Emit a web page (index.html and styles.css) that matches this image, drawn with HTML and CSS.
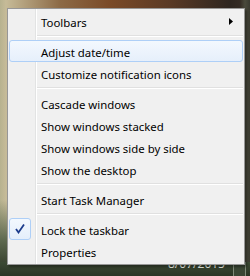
FILE: index.html
```
<!DOCTYPE html>
<html lang="en">
<head>
    <meta charset="UTF-8">
    <title>Taskbar menu</title>
    <link rel="stylesheet" href="styles.css">
</head>
<body>
    <div class="desktop">
        <div class="wallpaper"></div>
        <div class="taskbar">
            <span class="clock">8/07/2015</span>
            <span class="show-desktop"></span>
        </div>

        <ul class="menu">
            <li class="item has-sub">Toolbars
                <svg class="arrow" width="4" height="7" viewBox="0 0 4 7"><path d="M0 0 L4 3.5 L0 7 Z" fill="#000"/></svg>
            </li>
            <li class="sep"></li>
            <li class="item hover">Adjust date/time</li>
            <li class="item">Customize notification icons</li>
            <li class="sep"></li>
            <li class="item">Cascade windows</li>
            <li class="item">Show windows stacked</li>
            <li class="item">Show windows side by side</li>
            <li class="item">Show the desktop</li>
            <li class="sep"></li>
            <li class="item">Start Task Manager</li>
            <li class="sep"></li>
            <li class="item checked">
                <span class="check">
                    <svg width="12" height="12" viewBox="0 0 12 12"><path d="M2 6 L4.5 9.5 L10 1.5" stroke="#1c3c8c" stroke-width="1.8" fill="none"/></svg>
                </span>
                Lock the taskbar
            </li>
            <li class="item">Properties</li>
        </ul>
    </div>
</body>
</html>
```

FILE: styles.css
```
* {
    margin: 0;
    padding: 0;
    box-sizing: border-box;
}

body {
    font-family: 'Noto Sans', 'Open Sans', Arial, sans-serif;
    font-size: 11.4px;
    background: #2c3424;
}

/* Fundo */
.desktop {
    position: relative;
    width: 250px;
    height: 276px;
    overflow: hidden;
    display: flex;
    flex-direction: column;
}

.wallpaper {
    flex: 1;
    background:
        linear-gradient(90deg, rgba(0,0,0,0) 0, rgba(0,0,0,0) 240px, #4a4a3c 245px, #3a3a30 250px),
        linear-gradient(180deg, rgba(0,0,0,0) 0, rgba(0,0,0,0) 200px, #5e6a50 240px, #3c4632 262px),
        linear-gradient(90deg, #b7b28f 0, #c6bb98 6px, #8c6a46 60px, #7a4a28 110px, #5a3a26 170px, #2e2620 230px, #3a3028 250px);
}

.taskbar {
    height: 14px;
    position: relative;
    background: linear-gradient(180deg, #3c4a34, #2a3424);
}

.clock {
    position: absolute;
    left: 168px;
    top: -7px;
    color: #e8ece4;
    font-size: 12px;
}

.show-desktop {
    position: absolute;
    left: 233px;
    top: 0;
    width: 13px;
    height: 14px;
    border: 1px solid #7f8a78;
    border-bottom: none;
    background: #3a4634;
}

/* Menu de contexto */
.menu {
    position: absolute;
    left: 7px;
    top: 8px;
    width: 238px;
    list-style: none;
    padding: 1px 1px 2px 1px;
    background:
        linear-gradient(90deg, transparent 27px, #e2e3e3 27px, #e2e3e3 28px, #ffffff 28px, #ffffff 29px, transparent 29px),
        #f0f0f0;
    border: 1px solid #979797;
    box-shadow: 2px 2px 2px rgba(0, 0, 0, .35);
    color: #000;
}

.item {
    position: relative;
    height: 22px;
    padding-top: 2px;
    line-height: 19px;
    padding-left: 31px;
    border: 1px solid transparent;
    border-radius: 3px;
    white-space: nowrap;
}

.item.hover {
    background: linear-gradient(180deg, #f3f8fe, #e6effb);
    border-color: #aecff7;
}

.sep {
    height: 8px;
    margin-left: 28px;
    background: linear-gradient(180deg, transparent 3px, #e0e0e0 3px, #e0e0e0 4px, #ffffff 4px, #ffffff 5px, transparent 5px);
}

.arrow {
    position: absolute;
    right: 9px;
    top: 7px;
}

.check {
    position: absolute;
    left: -1px;
    top: -1px;
    width: 22px;
    height: 22px;
    border: 1px solid #aecff7;
    border-radius: 3px;
    background: linear-gradient(180deg, #f3f8fe, #e4eefb);
    display: flex;
    align-items: center;
    justify-content: center;
}
```
